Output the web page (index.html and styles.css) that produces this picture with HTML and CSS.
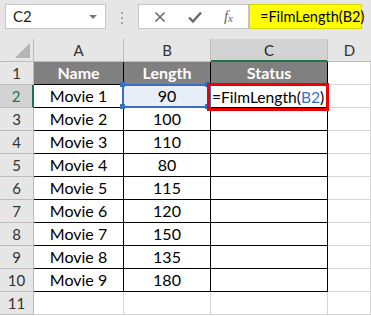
FILE: index.html
```html
<!DOCTYPE html>
<html lang="en">
<head>
  <meta charset="UTF-8">
  <meta name="viewport" content="width=device-width, initial-scale=1.0">
  <title>FilmLength</title>
  <link rel="stylesheet" href="styles.css">
</head>
<body>
  <div class="toolbar">
    <div class="namebox">C2<span class="caret"></span></div>
    <div class="grip"><span></span><span></span><span></span></div>
    <div class="buttons">
      <svg class="icon" width="12" height="12" viewBox="0 0 12 12"><path d="M1.5 1.5l9 9M10.5 1.5l-9 9" stroke="#6a6a6a" stroke-width="1.6"/></svg>
      <svg class="icon" width="14" height="12" viewBox="0 0 14 12"><path d="M1 6.5l4 4L13 1.5" fill="none" stroke="#6a6a6a" stroke-width="2.4"/></svg>
      <span class="fx">f<sub>x</sub></span>
    </div>
    <div class="formula">=FilmLength(B2)</div>
  </div>

  <div class="sheet">
    <div class="cell corner"></div>
    <div class="cell colhead">A</div>
    <div class="cell colhead">B</div>
    <div class="cell colhead active-col">C</div>
    <div class="cell colhead last">D</div>

    <div class="cell rowhead">1</div>
    <div class="cell tb th">Name</div>
    <div class="cell tb th">Length</div>
    <div class="cell tb th">Status</div>
    <div class="cell"></div>

    <div class="cell rowhead active-row">2</div>
    <div class="cell tb">Movie 1</div>
    <div class="cell tb ref">90</div>
    <div class="cell tb editing">
      <div class="redbox">=FilmLength(<span class="blue">B2</span>)</div>
    </div>
    <div class="cell"></div>

    <div class="cell rowhead">3</div>
    <div class="cell tb">Movie 2</div>
    <div class="cell tb">100</div>
    <div class="cell tb"></div>
    <div class="cell"></div>

    <div class="cell rowhead">4</div>
    <div class="cell tb">Movie 3</div>
    <div class="cell tb">110</div>
    <div class="cell tb"></div>
    <div class="cell"></div>

    <div class="cell rowhead">5</div>
    <div class="cell tb">Movie 4</div>
    <div class="cell tb">80</div>
    <div class="cell tb"></div>
    <div class="cell"></div>

    <div class="cell rowhead">6</div>
    <div class="cell tb">Movie 5</div>
    <div class="cell tb">115</div>
    <div class="cell tb"></div>
    <div class="cell"></div>

    <div class="cell rowhead">7</div>
    <div class="cell tb">Movie 6</div>
    <div class="cell tb">120</div>
    <div class="cell tb"></div>
    <div class="cell"></div>

    <div class="cell rowhead">8</div>
    <div class="cell tb">Movie 7</div>
    <div class="cell tb">150</div>
    <div class="cell tb"></div>
    <div class="cell"></div>

    <div class="cell rowhead">9</div>
    <div class="cell tb">Movie 8</div>
    <div class="cell tb">135</div>
    <div class="cell tb"></div>
    <div class="cell"></div>

    <div class="cell rowhead">10</div>
    <div class="cell tb">Movie 9</div>
    <div class="cell tb">180</div>
    <div class="cell tb"></div>
    <div class="cell"></div>

    <div class="cell rowhead">11</div>
    <div class="cell"></div>
    <div class="cell"></div>
    <div class="cell"></div>
    <div class="cell"></div>
  </div>
</body>
</html>
```

FILE: styles.css
```css
body {
  margin: 0;
  background-color: #fff;
  font-family: Lato, "Liberation Sans", sans-serif;
  font-size: 16px;
  color: #000;
  overflow: hidden;
}
.toolbar {
  display: flex;
  align-items: flex-start;
  height: 39px;
  padding: 4px 0 0 5px;
  box-sizing: border-box;
  background-color: #e6e6e6;
}
.namebox {
  position: relative;
  width: 101px;
  height: 25px;
  box-sizing: border-box;
  border: 1px solid #c6c6c6;
  background-color: #fff;
  padding-left: 7px;
  line-height: 23px;
  font-size: 15px;
  color: #222;
}
.caret {
  position: absolute;
  right: 8px;
  top: 10px;
  border-left: 4px solid transparent;
  border-right: 4px solid transparent;
  border-top: 4px solid #777;
}
.grip {
  display: flex;
  flex-direction: column;
  gap: 3px;
  width: 32px;
  align-items: center;
  padding-top: 8px;
}
.grip span {
  width: 2px;
  height: 2px;
  background-color: #a8a8a8;
}
.buttons {
  display: flex;
  align-items: center;
  justify-content: space-around;
  width: 111px;
  height: 25px;
  box-sizing: border-box;
  border: 1px solid #c6c6c6;
  background-color: #fff;
  padding: 0 4px;
}
.fx {
  font-family: "Liberation Serif", serif;
  font-style: italic;
  font-size: 15px;
  color: #666;
}
.fx sub {
  font-size: 11px;
  vertical-align: -1px;
}
.formula {
  width: 113px;
  height: 25px;
  box-sizing: border-box;
  background-color: #ffff00;
  border: 1px solid #d8d800;
  padding-left: 10px;
  line-height: 23px;
  font-size: 14.5px;
  white-space: nowrap;
}
.sheet {
  display: grid;
  grid-template-columns: 34px 90px 87px 117px 1fr;
  grid-auto-rows: 23px;
}
.cell {
  box-sizing: border-box;
  border-right: 1px solid #d4d4d4;
  border-bottom: 1px solid #d4d4d4;
  text-align: center;
  line-height: 22px;
  white-space: nowrap;
}
.corner {
  position: relative;
  background-color: #e6e6e6;
  border-color: #bcbcbc;
}
.corner::after {
  content: "";
  position: absolute;
  right: 3px;
  bottom: 3px;
  border-left: 15px solid transparent;
  border-bottom: 15px solid #b4b4b4;
}
.colhead {
  background-color: #e6e6e6;
  border-right-color: #bcbcbc;
  border-bottom-color: #bcbcbc;
  color: #333;
  font-size: 15px;
}
.colhead.last {
  border-right: none;
}
.active-col {
  background-color: #d3d3d3;
  border-bottom: 2px solid #217346;
  color: #262626;
}
.rowhead {
  background-color: #e6e6e6;
  border-right-color: #bcbcbc;
  border-bottom-color: #bcbcbc;
  color: #333;
  font-size: 15px;
}
.active-row {
  background-color: #d3d3d3;
  border-right: 2px solid #217346;
  color: #217346;
}
.tb {
  border-right-color: #000;
  border-bottom-color: #000;
}
.th {
  background-color: #808080;
  color: #fff;
  font-weight: bold;
}
.ref {
  position: relative;
  background-color: #e8eef8;
}
.ref::before {
  content: "";
  position: absolute;
  left: -2px;
  top: -1px;
  right: -1px;
  bottom: -1px;
  border: 2px solid #3b6fc6;
}
.ref::after {
  content: "";
  position: absolute;
  left: -4px;
  top: -3px;
  width: 5px;
  height: 5px;
  background-color: #3b6fc6;
  box-shadow: 85px 0 0 #3b6fc6, 0 22px 0 #3b6fc6, 85px 22px 0 #3b6fc6;
}
.editing {
  position: relative;
}
.redbox {
  position: absolute;
  left: -4px;
  top: -2px;
  right: -2px;
  bottom: -4px;
  border: 3px solid #ee0000;
  text-align: left;
  padding-left: 2px;
  line-height: 23px;
  font-size: 15.6px;
  white-space: nowrap;
}
.blue {
  color: #3b6fc6;
}
```
